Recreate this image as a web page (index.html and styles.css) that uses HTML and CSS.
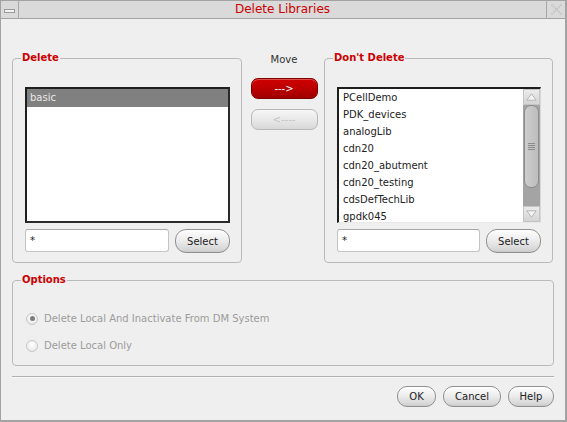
FILE: index.html
```html
<!DOCTYPE html>
<html>
<head>
<meta charset="utf-8">
<link rel="stylesheet" href="styles.css">
</head>
<body>
<div class="window">
  <div class="titlebar">
    <div class="tb-btn tb-min"><span class="min-glyph"></span></div>
    <div class="tb-title">Delete Libraries</div>
    <div class="tb-btn tb-close">
      <svg width="13" height="13" viewBox="0 0 13 13">
        <path d="M1.5 1.5 L11.5 11.5 M11.5 1.5 L1.5 11.5" stroke="#c4c4c4" stroke-width="2" stroke-dasharray="1.5 1" fill="none"/>
      </svg>
    </div>
  </div>
  <div class="content">
    <div class="top-row">
      <fieldset class="group">
        <legend>Delete</legend>
        <div class="group-body">
          <div class="listbox listbox-left">
            <div class="row selected">basic</div>
          </div>
          <div class="filter-row">
            <div class="input">*</div>
            <button class="btn sel-btn">Select</button>
          </div>
        </div>
      </fieldset>
      <div class="move-col">
        <div class="move-label">Move</div>
        <button class="mbtn mbtn-red">---&gt;</button>
        <button class="mbtn mbtn-dis">&lt;----</button>
      </div>
      <fieldset class="group">
        <legend>Don't Delete</legend>
        <div class="group-body">
          <div class="listbox listbox-right">
            <div class="list">
              <div class="row">PCellDemo</div>
              <div class="row">PDK_devices</div>
              <div class="row">analogLib</div>
              <div class="row">cdn20</div>
              <div class="row">cdn20_abutment</div>
              <div class="row">cdn20_testing</div>
              <div class="row">cdsDefTechLib</div>
              <div class="row">gpdk045</div>
            </div>
            <div class="scrollbar">
              <div class="sb-arrow">
                <svg width="11" height="8" viewBox="0 0 11 8"><path d="M5.5 0.8 L10.2 7.2 L0.8 7.2 Z" fill="#f4f4f4" stroke="#b4b4b4" stroke-width="1"/></svg>
              </div>
              <div class="sb-track">
                <div class="sb-thumb"><span class="grip"></span></div>
              </div>
              <div class="sb-arrow">
                <svg width="11" height="8" viewBox="0 0 11 8"><path d="M0.8 0.8 L10.2 0.8 L5.5 7.2 Z" fill="#f4f4f4" stroke="#b4b4b4" stroke-width="1"/></svg>
              </div>
            </div>
          </div>
          <div class="filter-row">
            <div class="input">*</div>
            <button class="btn sel-btn">Select</button>
          </div>
        </div>
      </fieldset>
    </div>
    <fieldset class="group options">
      <legend>Options</legend>
      <div class="opts-body">
        <div class="radio-row"><span class="radio checked"></span><span>Delete Local And Inactivate From DM System</span></div>
        <div class="radio-row"><span class="radio"></span><span>Delete Local Only</span></div>
      </div>
    </fieldset>
    <div class="separator"></div>
    <div class="buttons">
      <button class="btn ok-btn">OK</button>
      <button class="btn cancel-btn">Cancel</button>
      <button class="btn help-btn">Help</button>
    </div>
  </div>
</div>
</body>
</html>
```

FILE: styles.css
```css
html, body {
  margin: 0;
  padding: 0;
  background: #efefef;
}

.window {
  width: 567px;
  height: 422px;
  box-sizing: border-box;
  border-left: 1px solid #a3a3a3;
  border-right: 2px solid #a3a3a3;
  border-bottom: 2px solid #a3a3a3;
  background: #efefef;
  font-family: "DejaVu Sans", sans-serif;
  font-size: 10px;
  color: #222;
  display: flex;
  flex-direction: column;
}

/* Title bar */
.titlebar {
  height: 19px;
  box-sizing: border-box;
  border-top: 1px solid #a3a3a3;
  border-bottom: 1px solid #a3a3a3;
  background: #dadada;
  display: flex;
}
.tb-btn {
  display: flex;
  justify-content: center;
  align-items: center;
}
.tb-min {
  width: 17px;
  border-right: 1px solid #a8a8a8;
}
.min-glyph {
  width: 9px;
  height: 2px;
  margin-top: 3px;
  border: 1px solid #9a9a9a;
  background: #f2f2f2;
}
.tb-close {
  width: 18px;
  border-left: 1px solid #a8a8a8;
}
.tb-title {
  flex: 1;
  text-align: center;
  color: #cc0000;
  font-size: 12px;
  line-height: 17px;
}

/* Content */
.content {
  flex: 1;
  padding: 33px 11px 0 11px;
  display: flex;
  flex-direction: column;
}

.top-row {
  display: grid;
  grid-template-columns: 230px 82px 229px;
}

fieldset.group {
  margin: 0;
  padding: 0;
  min-width: 0;
  border: 1px solid #bababa;
  border-radius: 4px;
}
fieldset.group legend {
  margin-left: 8px;
  padding: 0 1px;
  color: #cc0000;
  font-weight: bold;
  font-size: 10px;
  line-height: 12px;
}

.group-body {
  padding: 23px 11px 9px 12px;
  display: flex;
  flex-direction: column;
  gap: 6px;
}

.listbox {
  height: 136px;
  box-sizing: border-box;
  background: #fff;
  overflow: hidden;
}
.listbox-left {
  border: 2px solid #1e1e1e;
  border-right-color: #2a2a2a;
  border-bottom-color: #2a2a2a;
}
.listbox-right {
  border-top: 2px solid #1e1e1e;
  border-left: 2px solid #1e1e1e;
  border-right: 1px solid #d8d8d8;
  border-bottom: 1px solid #e8e8e8;
  display: flex;
}
.list {
  flex: 1;
  overflow: hidden;
}
.row {
  height: 17px;
  line-height: 17px;
  padding-left: 3px;
  white-space: nowrap;
  color: #222;
}
.listbox-left .row.selected {
  height: 18px;
  line-height: 18px;
  background: #808080;
  color: #e8e8e8;
}
.listbox-right .row {
  padding-left: 4px;
}

/* Scrollbar */
.scrollbar {
  width: 17px;
  display: flex;
  flex-direction: column;
  background: #a4a4a4;
}
.sb-arrow {
  height: 16px;
  box-sizing: border-box;
  border: 1px solid #c4c4c4;
  background: linear-gradient(#ececec, #d4d4d4);
  display: flex;
  justify-content: center;
  align-items: center;
}
.sb-track {
  flex: 1;
  padding: 0 1px;
  display: flex;
  flex-direction: column;
}
.sb-thumb {
  height: 83px;
  box-sizing: border-box;
  border: 1px solid #8c8c8c;
  border-radius: 7px;
  background: linear-gradient(90deg, #cdcdcd, #bdbdbd);
  display: flex;
  justify-content: center;
  align-items: center;
}
.grip {
  width: 7px;
  height: 7px;
  background: repeating-linear-gradient(#8a8a8a 0 1px, transparent 1px 2px);
}

/* Filter row */
.filter-row {
  display: flex;
  gap: 6px;
  align-items: flex-start;
}
.input {
  flex: 1;
  height: 23px;
  box-sizing: border-box;
  border: 1px solid #c4c4c4;
  border-top-color: #a8a8a8;
  border-radius: 3px;
  background: #fff;
  padding-left: 4px;
  line-height: 21px;
  color: #222;
}

.btn {
  font-family: "DejaVu Sans", sans-serif;
  font-size: 10px;
  color: #222;
  height: 21px;
  box-sizing: border-box;
  padding: 0;
  border: 1px solid #909090;
  border-radius: 10px;
  background: linear-gradient(#fdfdfd, #ededed 45%, #d6d6d6 90%, #c8c8c8);
  box-shadow: inset 0 1px 0 #fff;
}
.sel-btn {
  width: 55px;
  height: 24px;
  border-radius: 11px;
}

/* Move column */
.move-col {
  display: flex;
  flex-direction: column;
  align-items: center;
}
.move-label {
  margin-top: 1px;
  line-height: 14px;
  color: #333;
  padding-left: 2px;
}
.mbtn {
  font-family: "DejaVu Sans", sans-serif;
  font-size: 10px;
  width: 67px;
  height: 21px;
  padding: 0;
  box-sizing: border-box;
  border-radius: 7px;
  margin-left: 2px;
}
.mbtn-red {
  margin-top: 11px;
  color: #fff;
  border: 1px solid #7a0000;
  background: linear-gradient(#d00000, #bb0000 50%, #a00000);
  box-shadow: inset 0 1px 0 #e04a4a;
}
.mbtn-dis {
  margin-top: 10px;
  color: #c4c4c4;
  border: 1px solid #b8b8b8;
  background: linear-gradient(#f6f6f6, #e8e8e8 50%, #d8d8d8);
}

/* Options */
fieldset.options {
  margin-top: 11px;
}
.opts-body {
  padding: 24px 0 11px 13px;
  display: flex;
  flex-direction: column;
  gap: 10px;
}
.radio-row {
  height: 17px;
  display: flex;
  align-items: center;
  gap: 6px;
  color: #9c9c9c;
}
.radio {
  width: 12px;
  height: 12px;
  box-sizing: border-box;
  border-radius: 50%;
  border: 1px solid #c6c6c6;
  background: radial-gradient(circle at 50% 35%, #ffffff, #ececec 70%, #dcdcdc);
  display: flex;
  justify-content: center;
  align-items: center;
}
.radio.checked::after {
  content: "";
  width: 5px;
  height: 5px;
  border-radius: 50%;
  background: #7c7c7c;
}

/* Bottom */
.separator {
  margin-top: 10px;
  border-top: 1px solid #b0b0b0;
  border-bottom: 1px solid #fafafa;
}
.buttons {
  margin-top: 8px;
  display: flex;
  justify-content: flex-end;
  gap: 7px;
}
.ok-btn { width: 39px; }
.cancel-btn { width: 58px; }
.help-btn { width: 46px; }
```
